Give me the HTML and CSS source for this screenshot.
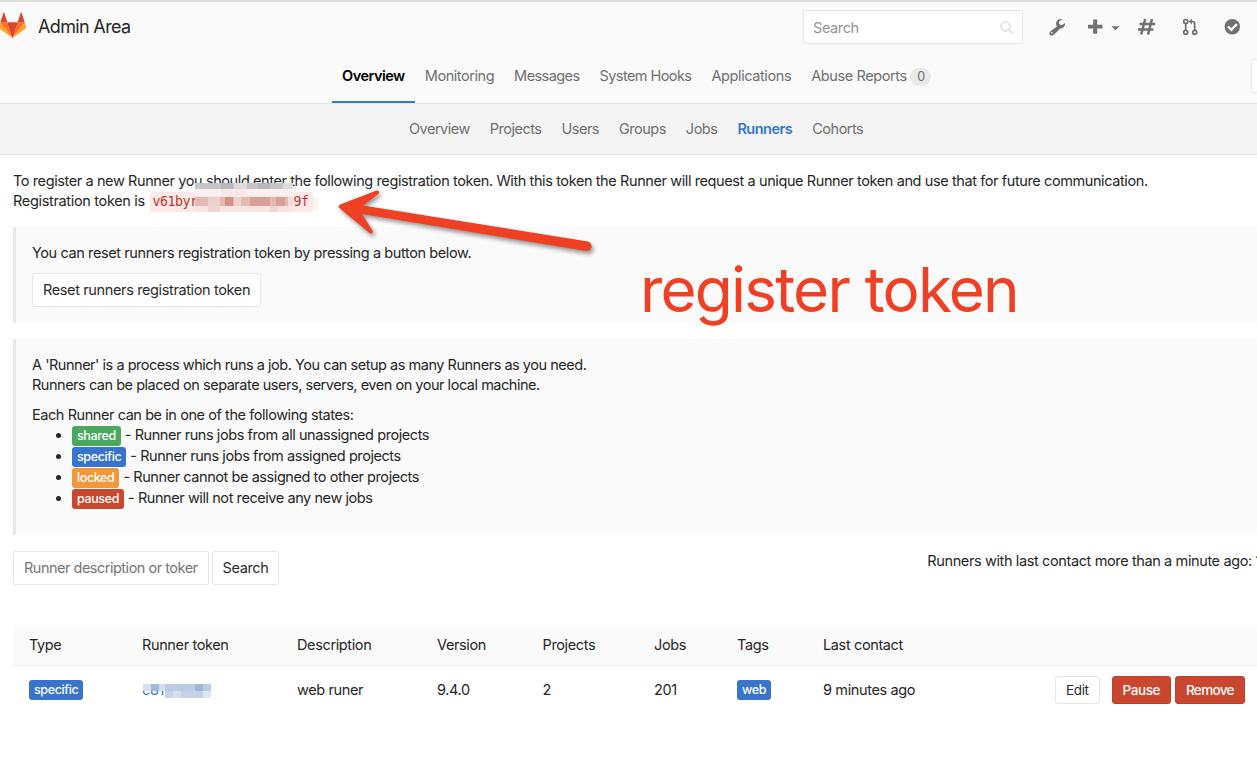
FILE: index.html
```html
<!DOCTYPE html>
<html lang="en">
<head>
<meta charset="utf-8">
<title>Admin Area</title>
<link rel="stylesheet" href="styles.css">
</head>
<body>
<header class="navbar">
  <div class="brand">
    <svg class="logo" width="28" height="28" viewBox="0 0 28 28"><path fill="#e24329" d="M13.500 26L8.500 10.500h10z"/><path fill="#fc6d26" d="M13.500 26L8.500 10.500H1.200zM13.500 26l5-15.500h7.300z"/><path fill="#fca326" d="M1.200 10.500L0 15.300q-.2 1 .7 1.500L13.500 26zM25.800 10.500L27 15.300q.2 1-.7 1.500L13.500 26z"/><path fill="#d6492f" d="M1.200 10.500h7.300L5.300.8q-.5-.9-.9 0zM25.800 10.500h-7.300L21.700.8q.5-.9.900 0zM8.500 10.500h10l-5 15.500z"/></svg>
    <span class="title">Admin Area</span>
  </div>
  <div class="tools">
    <div class="search"><span>Search</span>
      <svg width="13" height="13" viewBox="0 0 13 13" fill="none" stroke="#e3e3ea" stroke-width="2"><circle cx="5.500" cy="5.500" r="4.400"/><path d="M8.800 8.800l3.600 3.600"/></svg>
    </div>
    <svg class="icons" width="200" height="24" viewBox="1040 15 200 24" fill="#707070">
      <path fill-rule="evenodd" d="M1058.300 25.500l2.500 2.500-7.300 7q-1.600 1.300-3.200.3-1.900-1.600-.4-3.600zM1051.900 32.100a.8.800 0 1 0 0 1.600.8.800 0 0 0 0-1.600z"/>
      <path d="M1062.500 19.300q-3.200-1-5.300 1.200-2.100 2.400-.8 5.200 1.500 3.200 5 2.800 2.900-.6 3.600-3.800l-.1-1.400-3.400 2-2.400-1.300v-2.500z"/>
      <path d="M1093.200 19.500h4v5.200h5.300v3.900h-5.300v5.100h-4v-5.100h-5.200v-3.900h5.200zM1111.500 26.300h8l-4 4z"/>
      <path fill="none" stroke="#707070" stroke-width="2.500" d="M1145.200 19l-4 15.500M1152 19l-4 15.500M1139.600 24h15.400M1138 29.500h15.400"/>
      <g fill="none" stroke="#707070" stroke-width="1.700"><circle cx="1185.700" cy="21.500" r="2"/><circle cx="1185.700" cy="32.300" r="2"/><circle cx="1194.700" cy="32.300" r="2"/><path d="M1185.700 23.500v6.800M1190 21.500h2.200q2.500 0 2.500 2.600v6.200"/></g>
      <path d="M1188.700 21.500l3.200-3v6z"/>
      <circle cx="1232.300" cy="26.800" r="7.700"/><path fill="none" stroke="#fafafa" stroke-width="2.400" d="M1228 26.500l3.300 3.300 5.600-5.600"/>
    </svg>
  </div>
</header>
<nav class="main-nav">
  <a class="active">Overview</a><a>Monitoring</a><a>Messages</a><a>System Hooks</a><a>Applications</a><a>Abuse Reports <span class="count">0</span></a>
  <span class="settings"></span>
</nav>
<nav class="sub-nav"><a>Overview</a><a>Projects</a><a>Users</a><a>Groups</a><a>Jobs</a><a class="active">Runners</a><a>Cohorts</a></nav>
<main>
  <p class="intro">To register a new Runner you should enter the following registration token. With this token the Runner will request a unique Runner token and use that for future communication.</p>
  <p class="token-line">Registration token is <code>v61byr<span class="gap"></span>9f</code></p>
  <section class="block reset">
    <p>You can reset runners registration token by pressing a button below.</p>
    <button class="btn">Reset runners registration token</button>
  </section>
  <section class="block about">
    <p class="t1">A 'Runner' is a process which runs a job. You can setup as many Runners as you need.</p>
    <p class="t2">Runners can be placed on separate users, servers, even on your local machine.</p>
    <p class="t3">Each Runner can be in one of the following states:</p>
    <ul>
      <li><span class="label green">shared</span><span>- Runner runs jobs from all unassigned projects</span></li>
      <li><span class="label blue">specific</span><span>- Runner runs jobs from assigned projects</span></li>
      <li><span class="label orange">locked</span><span>- Runner cannot be assigned to other projects</span></li>
      <li><span class="label red">paused</span><span>- Runner will not receive any new jobs</span></li>
    </ul>
  </section>
  <div class="filter">
    <div class="field"><span>Runner description or token</span></div>
    <button class="btn find">Search</button>
    <span class="contact">Runners with last contact more than a minute ago: 1</span>
  </div>
  <div class="table">
    <div class="row head"><span>Type</span><span>Runner token</span><span>Description</span><span>Version</span><span>Projects</span><span>Jobs</span><span>Tags</span><span>Last contact</span><span></span></div>
    <div class="row"><span class="tag"><b class="label blue">specific</b></span><span class="hash">c81</span><span>web runer</span><span>9.4.0</span><span>2</span><span>201</span><span class="tag"><b class="label blue">web</b></span><span>9 minutes ago</span>
      <span class="actions"><button class="btn sm">Edit</button><button class="btn sm danger">Pause</button><button class="btn sm danger">Remove</button></span></div>
  </div>
</main>
<svg class="overlay" width="1257" height="766" viewBox="0 0 1257 766">
  <g shape-rendering="crispEdges">
    <path fill="#fff" d="M195 183h98v10h-98z"/>
    <path fill="#c5c5c7" d="M195 183h98v6h-98z"/><path fill="#b8b8bb" d="M221 183h12v6h-12zM258 183h12v6h-12z"/><path fill="#dcdcdd" d="M234 183h13v6h-13zM283 183h10v6h-10z"/>
    <path fill="#faf1f0" d="M195 189h98v7h-98z"/><path fill="#f8e9e7" d="M221 189h26v7h-26z"/>
    <path fill="#f9e6e4" d="M195 196h98v1h-98z"/>
    <path fill="#e4b8b3" d="M195 197h98v9h-98z"/><path fill="#d68f86" d="M225 197h8v9h-8z"/><path fill="#d9a09a" d="M250 197h20v9h-20zM276 197h9v9h-9z"/><path fill="#edcfcb" d="M208 197h12v9h-12zM234 197h7v9h-7z"/><path fill="#f5dcd8" d="M288 197h5v9h-5z"/>
    <path fill="#f7e4e1" d="M195 206h98v6h-98z"/><path fill="#f2d5d1" d="M208 206h12v6h-12zM270 206h8v6h-8z"/>
    <path fill="#fdf4f2" d="M313 197h5v14h-5z"/>
    <path fill="#fff" d="M142 680h70v11h-70z"/>
    <path fill="#bccce4" d="M143 684h68v7h-68z"/><path fill="#9fb7db" d="M151 684h8v7h-8zM195 684h8v7h-8z"/><path fill="#d3ddec" d="M143 684h8v7h-8zM159 684h6v7h-6z"/>
    <path fill="#c5d2e7" d="M165 691h38v7h-38z"/><path fill="#d5dfee" d="M173 691h8v7h-8z"/><path fill="#dfe7f3" d="M203 691h8v7h-8z"/>
  </g>
  <path class="arrow" d="M340 204.600L376.500 190.500Q380 190.200 379 193.500L363 205.500L588 241.500Q592.500 243.500 591.300 248Q590 251.300 586 251L362 214L373 231.500Q372.500 234.800 369.500 233L338.800 207.600Q337.800 205.800 340 204.600z"/>
</svg>
<div class="note">register token</div>
</body>
</html>
```
FILE: styles.css
```css
* { box-sizing: border-box; }
body { margin: 0; height: 766px; overflow: hidden; position: relative; background: #fff; color: #262626; font: 14.5px/20px Inter, "Open Sans", sans-serif; letter-spacing: -0.4px; white-space: nowrap; }
p { margin: 0; }
.navbar { height: 52px; border-top: 2px solid #dcdddd; background: #fafafa; display: flex; justify-content: space-between; }
.brand { display: flex; gap: 11px; padding-top: 10px; }
.logo { margin-left: -1px; }
.title { font-size: 18px; line-height: 29px; letter-spacing: -0.65px; }
.tools { display: flex; padding: 8px 17px 0 0; gap: 17px; }
.search { width: 220px; height: 34px; border: 1px solid #e5e5e5; border-radius: 2px; background: #fff; display: flex; align-items: center; justify-content: space-between; padding: 1px 9px 0; color: #959595; letter-spacing: -0.4px; }
.icons { margin-top: 5px; }
.main-nav { height: 52px; background: #fafafa; border-bottom: 1px solid #e5e5e5; display: flex; padding-left: 332px; color: #707070; }
.main-nav a { height: 51px; padding: 14px 10px 0; }
.main-nav a:nth-child(2) { letter-spacing: -0.45px; }
.main-nav a:nth-child(3), .main-nav a:nth-child(4) { letter-spacing: -0.57px; }
.main-nav .active { color: #000; font-weight: 600; border-bottom: 2px solid #3777d0; letter-spacing: -0.5px; }
.count { display: inline-block; width: 21px; height: 18px; border-radius: 9px; background: #e9e9e9; font-size: 12.500px; line-height: 18px; text-align: center; }
.settings { margin: 7px -10px 0 auto; width: 16px; height: 34px; border: 1px solid #e5e5e5; border-radius: 3px; background: #fff; }
.sub-nav { height: 51px; background: #f4f4f4; border-bottom: 1px solid #e5e5e5; padding: 15px 0 0 409px; display: flex; gap: 20px; color: #707070; letter-spacing: -0.5px; }
.sub-nav .active { color: #3777c8; font-weight: 600; }
main { padding: 16px 0 0 13px; }
.token-line { height: 20px; letter-spacing: -0.33px; }
code { display: inline-block; height: 20px; padding: 0 4px 0 3px; border-radius: 3px; background: #fbe9e7; color: #b8342a; font: 13.200px/19px "DejaVu Sans Mono", monospace; letter-spacing: -0.45px; margin-left: 1px; }
.gap { display: inline-block; width: 96px; }
.block { background: #fafafa; border-left: 3px solid #e7e7e7; padding: 16px; }
.reset { margin-top: 16px; height: 96px; }
.btn { font: inherit; letter-spacing: -0.37px; color: #2b2b2b; background: #fff; border: 1px solid #e5e5e5; border-radius: 3px; height: 34px; padding: 0 10px; }
.reset .btn { display: block; margin-top: 10px; }
.about { margin-top: 16px; height: 196px; }
.t1, .t2 { letter-spacing: -0.475px; }
.t3 { margin-top: 10px; letter-spacing: -0.43px; }
ul { margin: 0; padding-left: 40px; }
li { height: 21px; letter-spacing: -0.43px; }
.label { display: inline-block; height: 20px; padding: 0 5px; border-radius: 3px; color: #fff; font-size: 12.500px; font-weight: 500; line-height: 20px; margin-right: 4px; letter-spacing: -0.38px; }
.tag { margin-top: -2px; }
.green { background: #4aa85c; } .blue { background: #3874cb; } .orange { background: #f0983a; } .red { background: #ca472f; }
.filter { display: flex; margin-top: 16px; height: 34px; }
.field { width: 196px; height: 34px; border: 1px solid #e5e5e5; border-radius: 2px; padding: 6px 10px; color: #757575; }
.field span { display: block; overflow: hidden; letter-spacing: -0.5px; }
.find { margin-left: 3px; width: 67px; padding: 0; }
.contact { margin-left: auto; margin-right: -4px; letter-spacing: -0.38px; }
.table { margin-top: 40px; }
.row { display: grid; grid-template-columns: 113px 155px 140px 105.500px 111.500px 83px 86px 230px 1fr; padding-left: 16px; height: 48px; align-items: center; }
.head { height: 41px; background: #fafafa; border-bottom: 1px solid #eee; }
.row > span { letter-spacing: -0.37px; }
.row > .hash { color: #3777c8; }
.actions { display: flex; padding-left: 2px; gap: 4px; }
.sm { height: 28px; font-size: 13.500px; padding: 0 10px; }
.sm:first-child { margin-right: 8px; }
.danger { background: #ca472f; border-color: #bd3f2a; color: #fff; font-weight: 500; letter-spacing: -0.45px; }
.danger:last-child { letter-spacing: -0.65px; }
.overlay { position: absolute; left: 0; top: 0; }
.arrow { fill: #ef4023; filter: drop-shadow(2px 3px 2px #0006); }
.note { position: absolute; left: 640px; top: 252px; color: #ef4023; font-size: 62px; line-height: 76px; letter-spacing: -1.800px; }
```
